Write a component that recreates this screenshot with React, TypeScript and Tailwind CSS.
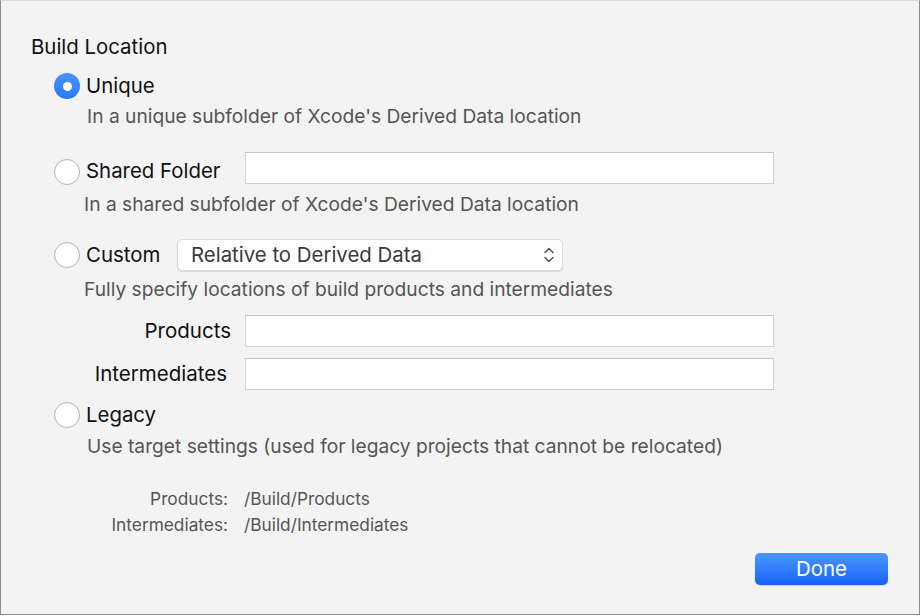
import React from 'react';

const FONT = { fontFamily: 'Inter, "Noto Sans", Roboto, sans-serif' };

function Radio({ checked }: { checked?: boolean }) {
  if (checked) {
    return (
      <span className="w-[26px] h-[26px] rounded-full bg-gradient-to-b from-[#4a93fb] to-[#2a78f5] flex items-center justify-center flex-shrink-0">
        <span className="w-[9px] h-[9px] rounded-full bg-white" />
      </span>
    );
  }
  return (
    <span className="w-[26px] h-[26px] rounded-full bg-white border border-[#b4b4b4] shadow-[inset_0_1px_1px_rgba(0,0,0,0.04)] flex-shrink-0" />
  );
}

function TextField({ className = '' }: { className?: string }) {
  return <div className={`h-[32px] bg-white border border-[#d2d2d2] border-t-[#c4c4c4] ${className}`} />;
}

function Desc({ children, pad }: { children: React.ReactNode; pad: string }) {
  return <div className={`h-[24px] flex items-center text-[19.2px] text-[#555] ${pad}`}>{children}</div>;
}

export default function App() {
  return (
    <div style={FONT} className="w-[920px] h-[615px] bg-[#f3f3f3] border-l border-r border-b border-[#8c8c8c] border-t border-t-[#dcdcdc] flex flex-col">
      {/* Title */}
      <div className="mt-[34px] h-[24px] pl-[30px] flex items-center text-[20.4px] text-[#111]">Build Location</div>

      {/* Unique */}
      <div className="mt-[12px] h-[30px] pl-[53px] flex items-center gap-[6px] text-[20.4px] text-[#111]">
        <Radio checked />
        <span>Unique</span>
      </div>
      <Desc pad="mt-[3px] pl-[86px]">In a unique subfolder of Xcode's Derived Data location</Desc>

      {/* Shared Folder */}
      <div className="mt-[24px] h-[32px] pl-[53px] flex items-center text-[20.4px] text-[#111]">
        <div className="flex items-center gap-[6px] w-[191px] pt-[7px]">
          <Radio />
          <span>Shared Folder</span>
        </div>
        <TextField className="w-[529px]" />
      </div>
      <Desc pad="mt-[8px] pl-[83px]">In a shared subfolder of Xcode's Derived Data location</Desc>

      {/* Custom */}
      <div className="mt-[23px] h-[32px] pl-[53px] flex items-center text-[20.4px] text-[#111]">
        <div className="flex items-center gap-[6px] w-[123px]">
          <Radio />
          <span>Custom</span>
        </div>
        <div className="w-[386px] h-[32px] bg-white rounded-[5px] border border-[#dadada] shadow-[0_1px_1px_rgba(0,0,0,0.12)] flex items-center justify-between pl-[13px] pr-[6px] text-[20.4px] text-[#3a3a3a]">
          <span>Relative to Derived Data</span>
          <svg width="14" height="20" viewBox="0 0 14 20" fill="none" stroke="#555" strokeWidth="1.6" strokeLinecap="round" strokeLinejoin="round">
            <path d="M3 7.5 L7 3.5 L11 7.5" />
            <path d="M3 12.5 L7 16.5 L11 12.5" />
          </svg>
        </div>
      </div>
      <Desc pad="mt-[6px] pl-[83px]">Fully specify locations of build products and intermediates</Desc>

      {/* Products / Intermediates fields */}
      <div className="mt-[14px] h-[32px] flex items-center text-[20.5px] text-[#111]">
        <span className="w-[231px] text-right pr-[1px]">Products</span>
        <TextField className="ml-[13px] w-[529px]" />
      </div>
      <div className="mt-[11px] h-[32px] flex items-center text-[20.5px] text-[#111]">
        <span className="w-[231px] text-right pr-[5px]">Intermediates</span>
        <TextField className="ml-[13px] w-[529px]" />
      </div>

      {/* Legacy */}
      <div className="mt-[10px] h-[30px] pl-[53px] flex items-center gap-[6px] text-[20.4px] text-[#111]">
        <Radio />
        <span>Legacy</span>
      </div>
      <Desc pad="mt-[4px] pl-[86px]">Use target settings (used for legacy projects that cannot be relocated)</Desc>

      {/* Legacy paths */}
      <div className="mt-[29px] flex flex-col gap-[2px] text-[17.3px] text-[#555]">
        <div className="h-[24px] flex items-center">
          <span className="w-[227px] text-right">Products:</span>
          <span className="ml-[16px]">/Build/Products</span>
        </div>
        <div className="h-[24px] flex items-center">
          <span className="w-[227px] text-right">Intermediates:</span>
          <span className="ml-[16px]">/Build/Intermediates</span>
        </div>
      </div>

      {/* Done */}
      <div className="mt-[16px] flex justify-end pr-[31px]">
        <button className="w-[133px] h-[32px] rounded-[5px] bg-gradient-to-b from-[#4c96fd] to-[#1662f8] text-white text-[20.4px] shadow-[0_1px_1px_rgba(0,0,0,0.15)]">
          Done
        </button>
      </div>
    </div>
  );
}
